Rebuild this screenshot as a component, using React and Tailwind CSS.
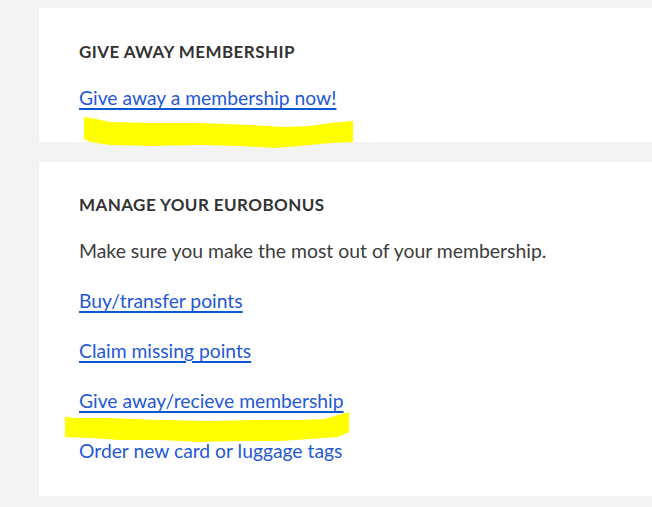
import React from "react";

const links = [
  "Buy/transfer points",
  "Claim missing points",
  "Give away/recieve membership",
];

function Heading({ children }) {
  return (
    <h2 className="text-[17px] font-bold uppercase tracking-[0.025em] leading-[20px] text-[#333333]">
      {children}
    </h2>
  );
}

function Link({ children, underline = true }) {
  return (
    <a
      href="#"
      className={`block w-fit text-[19.3px] leading-[24px] text-[#2458d6] ${
        underline ? "underline decoration-[#0b57d0] decoration-[1.5px] underline-offset-[3px]" : ""
      }`}
    >
      {children}
    </a>
  );
}

export default function App() {
  return (
    <div className="relative min-h-[507px] w-[652px] overflow-hidden bg-[#f3f3f3] pt-2 font-['Lato','Liberation_Sans',sans-serif]">
      {/* card: give away */}
      <section className="ml-[39px] h-[134px] bg-white pl-10 pt-[34px]">
        <Heading>Give away membership</Heading>
        <div className="mt-[24px]">
          <Link>Give away a membership now!</Link>
        </div>
      </section>

      {/* card: manage eurobonus */}
      <section className="ml-[39px] mt-5 h-[334px] bg-white pl-10 pt-[33px]">
        <Heading>Manage your Eurobonus</Heading>
        <p className="mt-[24px] text-[19.4px] leading-[24px] text-[#3c3c3c]">
          Make sure you make the most out of your membership.
        </p>
        <div className="mt-[26px] flex flex-col gap-[26px]">
          {links.map((l) => (
            <Link key={l}>{l}</Link>
          ))}
          <Link underline={false}>Order new card or luggage tags</Link>
        </div>
      </section>

      {/* marker highlights drawn on top of the screenshot */}
      <svg
        className="pointer-events-none absolute left-0 top-0"
        width="652"
        height="507"
        viewBox="0 0 652 507"
      >
        <path
          d="M84 117 L96 119 L110 122 L150 123 L200 123 L250 125 L285 127 L310 126 L330 123 L353 121 L353 142 L330 143 L300 146 L275 148 L240 146 L200 145 L150 146 L110 145 L90 142 L84 139 Z"
          fill="#ffff00"
        />
        <path
          d="M65 417 L75 418 L110 418 L160 420 L210 421 L260 420 L300 420 L325 419 L338 415 L349 412 L349 432 L338 437 L310 439 L280 441 L240 441 L200 442 L160 440 L120 440 L90 438 L65 437 Z"
          fill="#ffff00"
        />
      </svg>
    </div>
  );
}
